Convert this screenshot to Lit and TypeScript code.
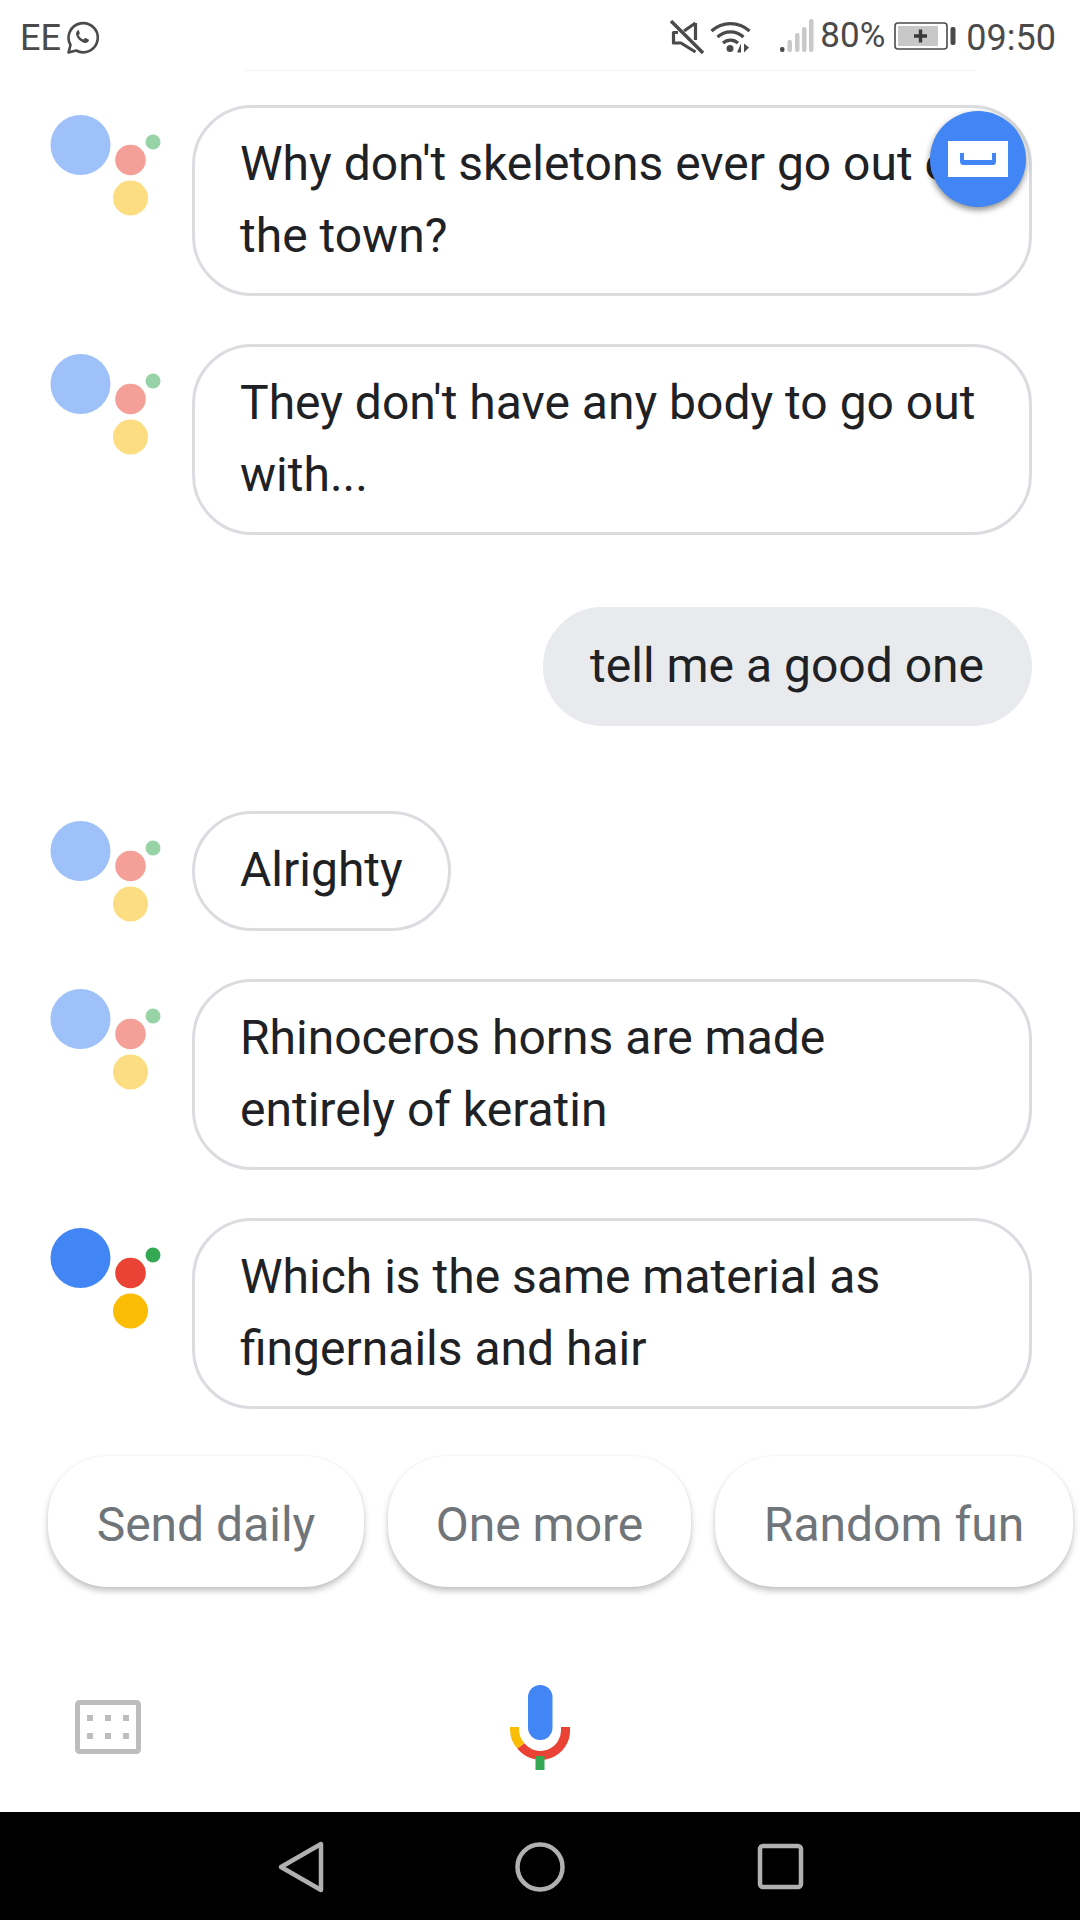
import { LitElement, html, css, svg } from "lit";
import { customElement } from "lit/decorators.js";

const logo = (on: boolean) => html`<svg class="logo ${on ? "" : "dim"}" viewBox="0 0 144 120" width="144" height="120">
  <circle cx="32.500" cy="40" r="30" fill="#4285f4"/>
  <circle cx="82.500" cy="55" r="15.300" fill="#ea4335"/>
  <circle cx="82.500" cy="93" r="17.500" fill="#fbbc05"/>
  <circle cx="105" cy="37" r="7.500" fill="#34a853"/>
</svg>`;

@customElement("app-root")
export class AppRoot extends LitElement {
  static styles = css`
    :host { display: flex; flex-direction: column; width: 1080px; height: 1920px; background: #fff; position: relative; overflow: hidden;
      font-family: Roboto, "Liberation Sans", sans-serif; color: #202124; }
    .status { height: 71px; flex: none; box-sizing: border-box; padding: 4px 24px 0 20px; display: flex; align-items: center; color: #4a4a4a; font-size: 36px; position: relative; }
    .status::after { content: ""; position: absolute; left: 245px; width: 731px; bottom: 0; height: 1px; background: #f3f3f3; }
    .status svg { flex: none; display: block; }
    .ee { margin-right: 5px; }
    .spacer { flex: 1; }
    .pct { margin: 0 9px 4px 6px; font-size: 35px; }
    .time { margin-left: 10px; }
    .mute { margin: 0 6px 2px 0; }
    .wifi { margin: 0 28px 3px 0; }
    .signal { margin-bottom: 4px; }
    .batt { margin-bottom: 4px; }
    .conv { flex: none; display: flex; flex-direction: column; padding: 34px 48px 0 48px; }
    .row { display: flex; align-items: flex-start; }
    .logo { flex: none; display: block; width: 144px; }
    .dim { opacity: .5; }
    .bubble { font-size: 48px; line-height: 72px; padding: 20px 46px 20px 45px; border: 3px solid #dadce0; border-radius: 60px; box-sizing: border-box; }
    .wide { flex: 1; height: 191px; }
    .wide span { display: block; white-space: nowrap; }
    .fit { height: 120px; padding-right: 45px; }
    .user { align-self: flex-end; background: #e8eaed; border-color: #e8eaed; margin: 72px 0 85px; height: 119px; padding: 20px 45px 20px 44px; }
    .g48 { margin-top: 48px; }
    .chips { flex: none; display: flex; gap: 24px; margin: 47px 0 0 48px; }
    .chip { height: 131px; box-sizing: border-box; padding-top: 6px; border-radius: 60px; background: #fff; display: flex; align-items: center; justify-content: center;
      font-size: 48px; color: #70757a; box-shadow: 0 4px 6px rgba(0,0,0,.24), 0 0 2px rgba(0,0,0,.06); }
    .input { flex: 1; display: grid; grid-template-columns: 1fr auto 1fr; align-items: start; }
    .kb { margin: 113px 0 0 75px; display: block; }
    .mic { margin-top: 98px; display: block; }
    .nav { height: 108px; flex: none; background: #000; display: flex; justify-content: center; align-items: flex-start; padding-top: 28px; box-sizing: border-box; }
    .nav svg { display: block; }
    .fab { position: absolute; left: 930px; top: 111px; width: 96px; height: 96px; border-radius: 50%; background: #4285f4; box-shadow: 0 3px 6px rgba(0,0,0,.45);
      display: flex; align-items: center; justify-content: center; }
  `;

  render() {
    return html`
      <div class="status">
        <span class="ee">EE</span>
        <svg width="34" height="34" viewBox="0 0 34 34" fill="none">
          <path d="M2.500 31.500l2-7.500a14.600 14.600 0 1 1 5.600 5.500z" stroke="#4a4a4a" stroke-width="2.600" stroke-linejoin="round"/>
          <path d="M12 9.500c-1.500.8-2.500 2.600-1.600 5 1.400 3.500 4 6 7.400 7.300 2.400.8 4.400-.4 5-2 .3-.7 0-1.200-.6-1.500l-2.600-1.300c-.5-.2-.9 0-1.200.4l-1 1.200c-2.300-.9-3.800-2.500-4.800-4.600l.9-1c.4-.4.4-.8.2-1.200l-1-2.500c-.2-.5-.6-.6-1.200-.5z" fill="#4a4a4a"/>
        </svg>
        <div class="spacer"></div>
        <svg class="mute" width="34" height="34" viewBox="0 0 34 34" fill="none">
          <path d="M25.500 3L14 11M8 12.500H3.500v10.500H11l14.500 9M25.500 3v17" stroke="#4a4a4a" stroke-width="3.200" stroke-linejoin="round"/>
          <path d="M1 1l32 32" stroke="#4a4a4a" stroke-width="3.400"/>
        </svg>
        <svg class="wifi" width="41" height="33" viewBox="0 0 41 33" fill="none">
          <path d="M1.500 11a28 28 0 0 1 38 0M7.500 17a19 19 0 0 1 26 0M13 23a11 11 0 0 1 15 0" stroke="#4a4a4a" stroke-width="3.200"/>
          <circle cx="20" cy="28.500" r="3.500" fill="#4a4a4a"/>
          <path d="M31 32.500v-9l-4 9zM34 23.500v9l5-5z" fill="#4a4a4a"/>
        </svg>
        <svg class="signal" width="35" height="34" viewBox="0 0 35 34">
          <rect x="1" y="28" width="4.500" height="5" rx="2" fill="#4a4a4a"/>
          <rect x="8.500" y="21" width="4.500" height="12" rx="2" fill="#c9c9c9"/>
          <rect x="16" y="14" width="4.500" height="19" rx="2" fill="#c9c9c9"/>
          <rect x="23" y="8" width="4.500" height="25" rx="2" fill="#c9c9c9"/>
          <rect x="30" y="0" width="4.500" height="33" rx="2" fill="#c9c9c9"/>
        </svg>
        <span class="pct">80%</span>
        <svg class="batt" width="62" height="28" viewBox="0 0 62 28">
          <rect x="1" y="1" width="52" height="26" rx="3" fill="#fff" stroke="#4a4a4a" stroke-width="1.600"/>
          <rect x="4" y="4" width="40" height="20" fill="#c8c8c8"/>
          <path d="M26.500 7.500v13M20 14h13" stroke="#3a3a3a" stroke-width="3.400"/>
          <rect x="56.500" y="5" width="5" height="18" rx="2" fill="#4a4a4a"/>
        </svg>
        <span class="time">09:50</span>
      </div>

      <div class="conv">
        <div class="row">${logo(false)}<div class="bubble wide"><span>Why don't skeletons ever go out of</span><span>the town?</span></div></div>
        <div class="row g48">${logo(false)}<div class="bubble wide"><span>They don't have any body to go out</span><span>with...</span></div></div>
        <div class="bubble user">tell me a good one</div>
        <div class="row">${logo(false)}<div class="bubble fit">Alrighty</div></div>
        <div class="row g48">${logo(false)}<div class="bubble wide"><span>Rhinoceros horns are made</span><span>entirely of keratin</span></div></div>
        <div class="row g48">${logo(true)}<div class="bubble wide"><span>Which is the same material as</span><span>fingernails and hair</span></div></div>
      </div>

      <div class="chips">
        <div class="chip" style="width:316px">Send daily</div>
        <div class="chip" style="width:303px">One more</div>
        <div class="chip" style="width:358px">Random fun</div>
      </div>

      <div class="input">
        <svg class="kb" width="66" height="54" viewBox="0 0 66 54">
          <rect x="2.500" y="2.500" width="61" height="49" rx="2" fill="none" stroke="#bdbdbd" stroke-width="5"/>
          ${[15, 33, 51].map((x) => svg`<rect x="${x - 3}" y="15" width="6" height="6" fill="#bdbdbd"/><rect x="${x - 3}" y="33" width="6" height="6" fill="#bdbdbd"/>`)}
        </svg>
        <svg class="mic" width="60" height="86" viewBox="0 0 60 86" fill="none">
          <path d="M4.500 42v2a25 25 0 0 0 6.500 17" stroke="#fbbc05" stroke-width="9"/>
          <path d="M11 61a25 25 0 0 0 44.500-17v-2" stroke="#ea4335" stroke-width="9"/>
          <rect x="25.500" y="71" width="9" height="14" fill="#34a853"/>
          <rect x="18" y="0" width="24.500" height="55" rx="12.200" fill="#4285f4"/>
        </svg>
        <div></div>
      </div>

      <div class="nav">
        <svg width="600" height="56" viewBox="0 0 600 56" fill="none" stroke="#b0b0b0" stroke-width="4.500" stroke-linejoin="round">
          <path d="M81 4v46L41 27z"/>
          <circle cx="300" cy="27" r="22.500"/>
          <rect x="520" y="6" width="41" height="41" rx="3"/>
        </svg>
      </div>

      <div class="fab">
        <svg width="60" height="36" viewBox="0 0 60 36">
          <rect width="60" height="36" fill="#fff"/>
          <path d="M12 12v8q0 4 3 4h30q3 0 3-4v-8h-4v7H16v-7z" fill="#4285f4"/>
        </svg>
      </div>
    `;
  }
}
